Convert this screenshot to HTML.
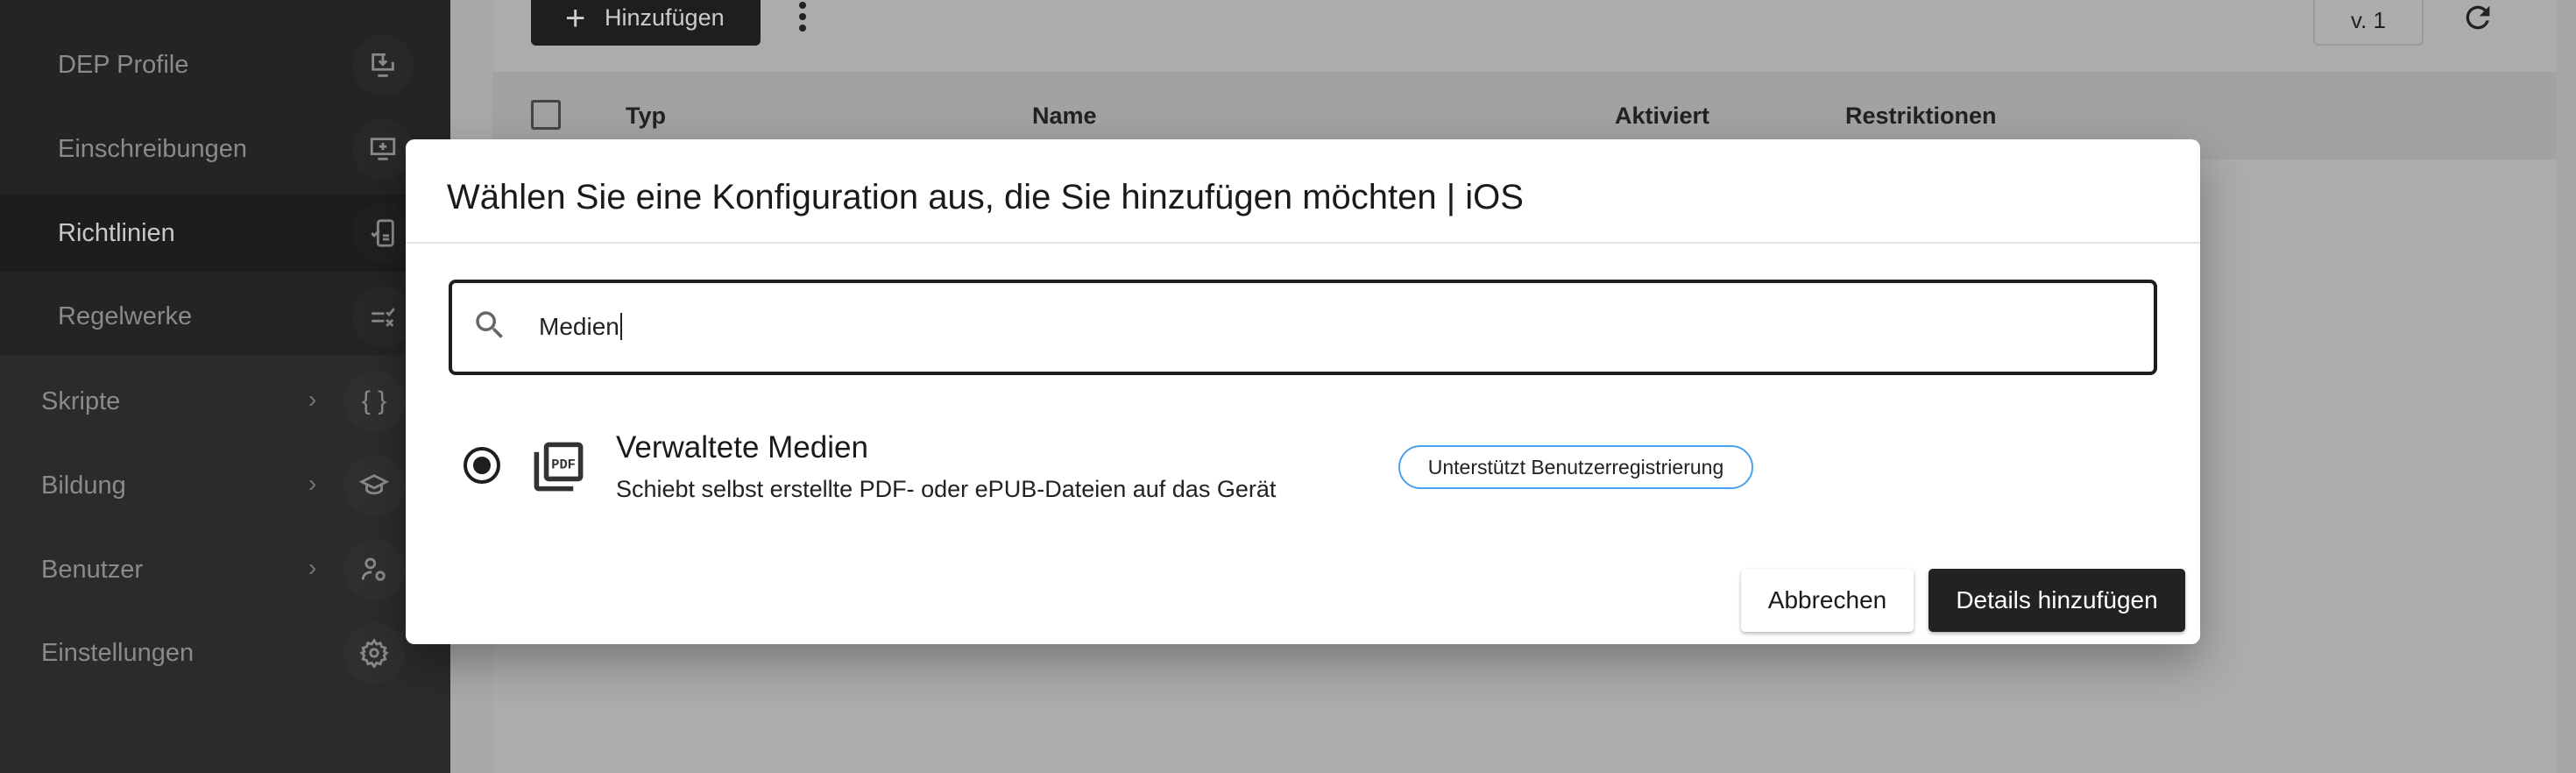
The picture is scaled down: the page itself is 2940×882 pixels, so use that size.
<!DOCTYPE html>
<html><head><meta charset="utf-8"><style>
*{margin:0;padding:0;box-sizing:border-box}
body{width:2940px;height:882px;overflow:hidden;position:relative;background:#a9a9a9;font-family:"Liberation Sans",sans-serif}
.abs{position:absolute}
.side{left:0;top:0;width:514px;height:882px;background:#2b2b2b}
.sub{left:0;top:0;width:514px;height:405px;background:#242424}
.sel{left:0;top:222px;width:514px;height:88px;background:#1d1d1d}
.si{position:absolute;color:#8a8a8a;font-size:29px}
.ic{position:absolute;width:70px;height:70px;border-radius:50%;background:#2f2f2f;display:flex;align-items:center;justify-content:center}
.sub .ic{background:#282828}
.chev{position:absolute;color:#777;font-size:28px}
</style></head><body>
<div class="abs" style="left:562px;top:0;width:2356px;height:882px;background:#acacac"></div>
<div class="abs" style="left:562px;top:82px;width:2356px;height:100px;background:#a2a2a2"></div>
<div class="abs" style="left:2918px;top:0;width:22px;height:882px;background:#a6a6a6"></div>
<div class="abs" style="left:606px;top:-6px;width:262px;height:58px;background:#1e1e1e;border-radius:6px;color:#ccc;font-size:27px;line-height:52px;padding-left:84px">Hinzufügen</div>
<div class="abs" style="left:645px;top:6px;color:#ccc;font-size:40px;line-height:30px">+</div>
<div class="abs" style="left:912px;top:0;width:10px"><div style="width:8px;height:8px;border-radius:50%;background:#222;margin:2px 0 5px"></div><div style="width:8px;height:8px;border-radius:50%;background:#222;margin-bottom:5px"></div><div style="width:8px;height:8px;border-radius:50%;background:#222"></div></div>
<div class="abs" style="left:2640px;top:-4px;width:126px;height:56px;border:2px solid #999;border-radius:6px;font-size:26px;color:#222;text-align:center;line-height:50px">v. 1</div>
<svg class="abs" style="left:2808px;top:0" width="40" height="40" viewBox="0 0 24 24"><path d="M17.65 6.35A7.96 7.96 0 0 0 12 4a8 8 0 1 0 7.73 10h-2.08A6 6 0 1 1 12 6c1.66 0 3.140.69 4.22 1.78L13 11h7V4z" fill="#222"/></svg>
<div class="abs" style="left:606px;top:114px;width:34px;height:34px;border:3px solid #444;border-radius:3px"></div>
<div class="abs" style="top:117px;left:714px;font-size:27px;font-weight:bold;color:#222">Typ</div>
<div class="abs" style="top:117px;left:1178px;font-size:27px;font-weight:bold;color:#222">Name</div>
<div class="abs" style="top:117px;left:1843px;font-size:27px;font-weight:bold;color:#222">Aktiviert</div>
<div class="abs" style="top:117px;left:2106px;font-size:27px;font-weight:bold;color:#222">Restriktionen</div>

<div class="abs side">
 <div class="abs sub">
  <div class="si" style="left:66px;top:58px">DEP Profile</div>
  <div class="si" style="left:66px;top:154px">Einschreibungen</div>
  <div class="abs sel"></div>
  <div class="si" style="left:66px;top:250px;color:#c8c8c8">Richtlinien</div>
  <div class="si" style="left:66px;top:345px">Regelwerke</div>
  <div class="ic" style="left:402px;top:40px"><svg width="34" height="34" viewBox="0 0 24 24" fill="none" stroke="#8a8a8a" stroke-width="2"><path d="M14 3H4v12h16v-6M12 3v8m-3-3l3 3 3-3M8 20h8"/></svg></div>
  <div class="ic" style="left:402px;top:135px"><svg width="34" height="34" viewBox="0 0 24 24" fill="none" stroke="#8a8a8a" stroke-width="2"><rect x="3" y="4" width="18" height="12"/><path d="M12 7v6M9 10h6M8 20h8"/></svg></div>
  <div class="ic" style="left:402px;top:231px;background:#202020"><svg width="34" height="34" viewBox="0 0 24 24" fill="none" stroke="#8a8a8a" stroke-width="2"><rect x="8" y="2" width="12" height="20" rx="2"/><path d="M3 12l2 2 4-4M12 14h5M12 17h5"/></svg></div>
  <div class="ic" style="left:402px;top:327px"><svg width="34" height="34" viewBox="0 0 24 24" fill="none" stroke="#8a8a8a" stroke-width="2"><path d="M3 9h10M3 15h10M15 14l5 5m0-5l-5 5M15 8l2 2 4-5"/></svg></div>
 </div>
 <div class="si" style="left:47px;top:442px">Skripte</div>
 <div class="si" style="left:47px;top:538px">Bildung</div>
 <div class="si" style="left:47px;top:634px">Benutzer</div>
 <div class="si" style="left:47px;top:729px">Einstellungen</div>
 <div class="chev" style="left:352px;top:440px">›</div>
 <div class="chev" style="left:352px;top:536px">›</div>
 <div class="chev" style="left:352px;top:632px">›</div>
 <div class="ic" style="left:392px;top:423px"><span style="color:#8a8a8a;font-size:30px">{ }</span></div>
 <div class="ic" style="left:392px;top:519px"><svg width="34" height="34" viewBox="0 0 24 24" fill="none" stroke="#8a8a8a" stroke-width="2"><path d="M2 9l10-5 10 5-10 5zM6 11v5c3 3 9 3 12 0v-5"/></svg></div>
 <div class="ic" style="left:392px;top:615px"><svg width="34" height="34" viewBox="0 0 24 24" fill="none" stroke="#8a8a8a" stroke-width="2"><circle cx="9" cy="7" r="3.5"/><path d="M3 20c0-4 3-6 7-6"/><circle cx="17" cy="17" r="3"/></svg></div>
 <div class="ic" style="left:392px;top:710px"><svg width="34" height="34" viewBox="0 0 24 24" fill="none" stroke="#8a8a8a" stroke-width="2"><circle cx="12" cy="12" r="3"/><path d="M12 2l2 3 3-1 1 3 3 1-1 3 2 1-2 2 1 3-3 1-1 3-3-1-2 3-2-3-3 1-1-3-3-1 1-3-2-2 2-1-1-3 3-1 1-3 3 1z"/></svg></div>
</div>

<div class="abs" style="left:463px;top:159px;width:2048px;height:576px;background:#fff;border-radius:10px;box-shadow:0 20px 50px rgba(0,0,0,.3)">
 <div class="abs" style="left:47px;top:44px;font-size:40px;color:#1a1a1a">Wählen Sie eine Konfiguration aus, die Sie hinzufügen möchten | iOS</div>
 <div class="abs" style="left:0;top:117px;width:2048px;height:2px;background:#e2e2e2"></div>
 <div class="abs" style="left:49px;top:160px;width:1950px;height:109px;border:4px solid #1e1e1e;border-radius:8px"></div>
 <svg class="abs" style="left:75px;top:191px" width="42" height="42" viewBox="0 0 24 24"><path d="M15.5 14h-.79l-.28-.27A6.47 6.47 0 0 0 16 9.5 6.5 6.5 0 1 0 9.5 16c1.61 0 3.090-.59 4.23-1.57l.27.28v.79l5 4.99L20.49 19zm-6 0C7.01 14 5 11.99 5 9.5S7.01 5 9.5 5 14 7.01 14 9.5 11.99 14 9.5 14" fill="#666"/></svg>
 <div class="abs" style="left:152px;top:198px;font-size:28px;color:#222">Medien<span style="border-left:2px solid #222;margin-left:1px"></span></div>
 <div class="abs" style="left:66px;top:351px;width:42px;height:42px;border:4px solid #1e1e1e;border-radius:50%"><div style="margin:7px;width:20px;height:20px;border-radius:50%;background:#1e1e1e"></div></div>
 <svg class="abs" style="left:141px;top:340px" width="67" height="67" viewBox="0 0 24 24"><path d="M20 2H8c-1.1 0-2 .9-2 2v12c0 1.1.9 2 2 2h12c1.1 0 2-.9 2-2V4c0-1.1-.9-2-2-2m0 14H8V4h12zM4 6H2v14c0 1.1.9 2 2 2h14v-2H4z" fill="#333"/><text x="14" y="12.8" font-size="5.5" font-family="Liberation Mono" font-weight="bold" fill="#333" text-anchor="middle">PDF</text></svg>
 <div class="abs" style="left:240px;top:332px;font-size:35px;color:#1a1a1a">Verwaltete Medien</div>
 <div class="abs" style="left:240px;top:384px;font-size:27px;color:#222">Schiebt selbst erstellte PDF- oder ePUB-Dateien auf das Gerät</div>
 <div class="abs" style="left:1133px;top:349px;width:405px;height:50px;border:2px solid #4aa0f0;border-radius:25px;font-size:23px;color:#222;text-align:center;line-height:46px">Unterstützt Benutzerregistrierung</div>
 <div class="abs" style="left:1524px;top:490px;width:197px;height:72px;border-radius:5px;background:#fff;box-shadow:0 2px 4px rgba(0,0,0,.3);font-size:28px;color:#1a1a1a;text-align:center;line-height:72px">Abbrechen</div>
 <div class="abs" style="left:1738px;top:490px;width:293px;height:72px;border-radius:5px;background:#222;box-shadow:0 2px 4px rgba(0,0,0,.3);font-size:28px;color:#fff;text-align:center;line-height:72px">Details hinzufügen</div>
</div>
</body></html>
